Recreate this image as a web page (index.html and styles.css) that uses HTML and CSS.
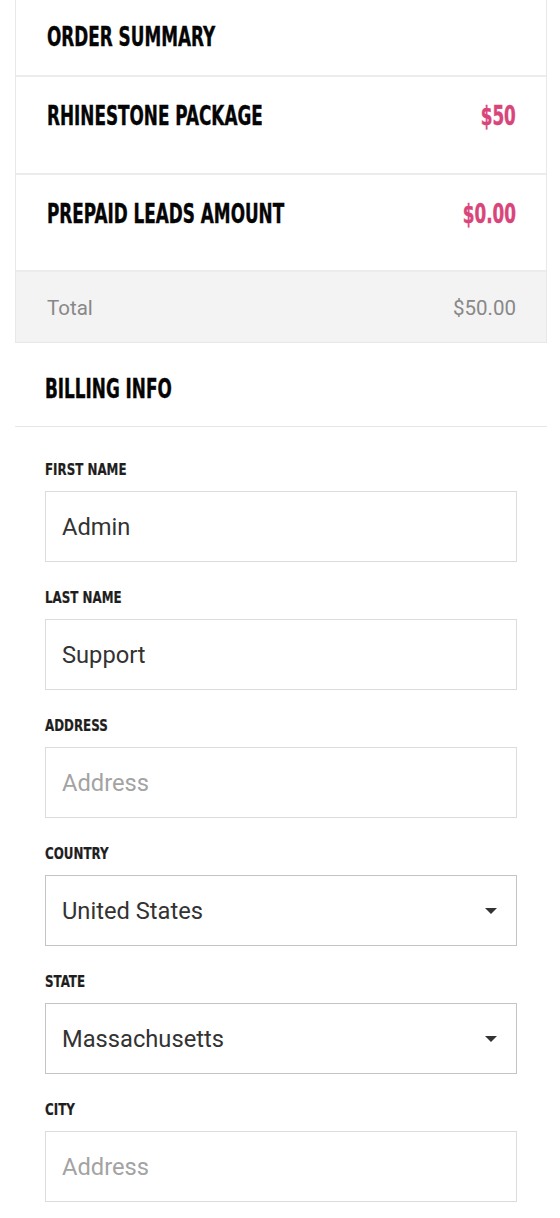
FILE: index.html
```html
<!DOCTYPE html>
<html lang="en">
<head>
<meta charset="utf-8">
<title>Checkout</title>
<link rel="stylesheet" href="styles.css">
</head>
<body>
<div class="page">
  <section class="summary">
    <div class="row row-head">
      <h2 class="heading">ORDER SUMMARY</h2>
    </div>
    <div class="row row-item">
      <span class="heading">RHINESTONE PACKAGE</span>
      <span class="heading price">$50</span>
    </div>
    <div class="row row-item">
      <span class="heading">PREPAID LEADS AMOUNT</span>
      <span class="heading price">$0.00</span>
    </div>
    <div class="row row-total">
      <span>Total</span>
      <span>$50.00</span>
    </div>
  </section>

  <section class="billing">
    <div class="billing-head">
      <h2 class="heading">BILLING INFO</h2>
    </div>
    <form class="fields">
      <div class="field">
        <label class="label" for="fn">FIRST NAME</label>
        <input class="control" id="fn" type="text" value="Admin">
      </div>
      <div class="field">
        <label class="label" for="ln">LAST NAME</label>
        <input class="control" id="ln" type="text" value="Support">
      </div>
      <div class="field">
        <label class="label" for="ad">ADDRESS</label>
        <input class="control" id="ad" type="text" placeholder="Address">
      </div>
      <div class="field">
        <label class="label" for="co">COUNTRY</label>
        <div class="select-wrap">
          <select class="control select" id="co">
            <option>United States</option>
          </select>
        </div>
      </div>
      <div class="field">
        <label class="label" for="st">STATE</label>
        <div class="select-wrap">
          <select class="control select" id="st">
            <option>Massachusetts</option>
          </select>
        </div>
      </div>
      <div class="field">
        <label class="label" for="ci">CITY</label>
        <input class="control" id="ci" type="text" placeholder="Address">
      </div>
    </form>
  </section>
</div>
</body>
</html>
```

FILE: styles.css
```css
* { box-sizing: border-box; }

html, body {
  margin: 0;
  padding: 0;
  background: #ffffff;
}

body {
  font-family: Roboto, "Liberation Sans", Arial, sans-serif;
  color: #333333;
}

.page {
  width: 532px;
  margin-left: 15px;
}

.heading {
  display: inline-block;
  font-family: "DejaVu Sans Condensed", "DejaVu Sans", sans-serif;
  font-stretch: condensed;
  font-weight: 700;
  font-size: 26px;
  line-height: 30px;
  letter-spacing: 0;
  white-space: nowrap;
  color: #050505;
  margin: 0;
  -webkit-text-stroke: 0.4px currentColor;
  transform: scaleX(0.72);
  transform-origin: left center;
}

.summary {
  border: 1px solid #e8e8e8;
  border-top: none;
}

.row {
  display: flex;
  justify-content: space-between;
  align-items: flex-start;
  padding-left: 31px;
  padding-right: 30px;
  border-bottom: 2px solid #ececec;
}

.row-head {
  padding-top: 22px;
  padding-bottom: 23px;
}

.row-item {
  padding-top: 24px;
  padding-bottom: 42px;
}

.row-item:nth-child(3) {
  padding-bottom: 41px;
}

.price {
  color: #d9457a;
  transform-origin: right center;
}

.row-total {
  background: #f3f3f3;
  border-bottom: none;
  padding-top: 24px;
  padding-bottom: 22px;
  font-size: 20.5px;
  line-height: 24px;
  color: #888888;
}

.billing-head {
  padding: 31px 30px 22px;
  border-bottom: 1px solid #e6e6e6;
}

.fields {
  display: flex;
  flex-direction: column;
  gap: 26px;
  padding: 33px 30px 0;
}

.field {
  display: flex;
  flex-direction: column;
  align-items: flex-start;
  gap: 11px;
}

.label {
  display: inline-block;
  font-family: "DejaVu Sans Condensed", "DejaVu Sans", sans-serif;
  font-stretch: condensed;
  font-weight: 700;
  font-size: 16.5px;
  line-height: 20px;
  white-space: nowrap;
  color: #1e1e1e;
  -webkit-text-stroke: 0.2px currentColor;
  transform: scaleX(0.8);
  transform-origin: left center;
}

.control {
  display: block;
  width: 472px;
  height: 71px;
  margin: 0;
  padding: 0 16px;
  border: 1px solid #dcdcdc;
  border-radius: 0;
  background: #ffffff;
  font-family: Roboto, "Liberation Sans", Arial, sans-serif;
  font-size: 23.7px;
  color: #333333;
  outline: none;
}

.control::placeholder {
  color: #a3a3a3;
  opacity: 1;
}

.select-wrap {
  position: relative;
  width: 472px;
}

.select {
  -webkit-appearance: none;
  appearance: none;
  border-color: #c4c4c4;
}

.select-wrap::after {
  content: "";
  position: absolute;
  right: 20px;
  top: 33px;
  width: 0;
  height: 0;
  border-left: 6px solid transparent;
  border-right: 6px solid transparent;
  border-top: 6px solid #333333;
  pointer-events: none;
}
```
